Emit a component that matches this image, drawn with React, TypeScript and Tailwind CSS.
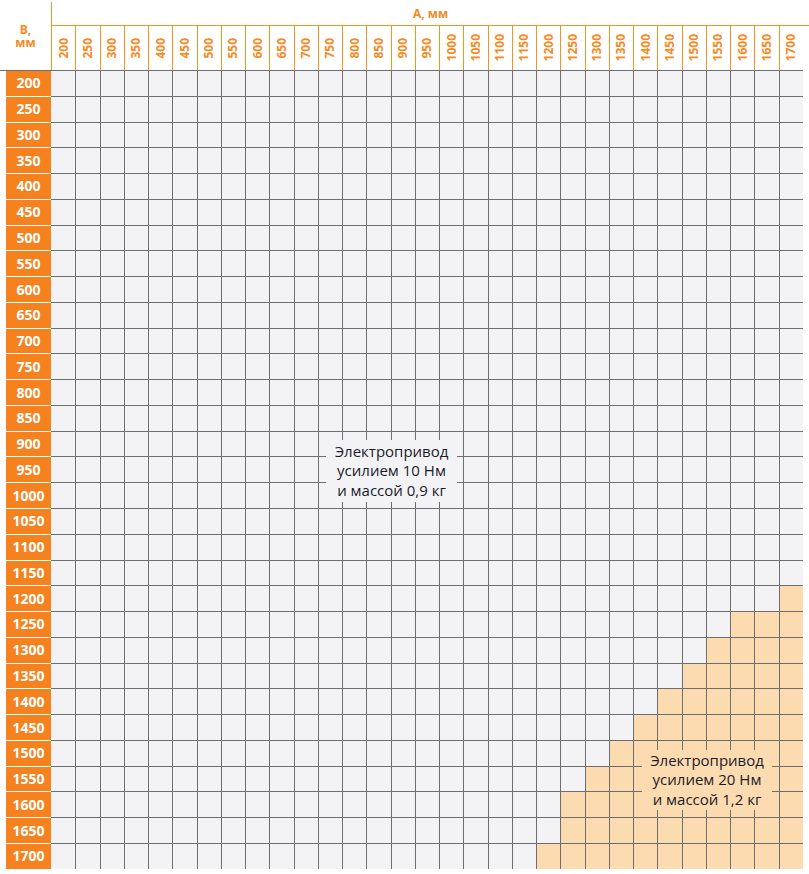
import React from "react";

const values = Array.from({ length: 31 }, (_, i) => 200 + i * 50);
const peachStart: Record<number, number> = {
  20: 30,
  21: 28,
  22: 27,
  23: 26,
  24: 25,
  25: 24,
  26: 23,
  27: 22,
  28: 21,
  29: 21,
  30: 20,
};

export default function App() {
  return (
    <div className="relative w-[809px] h-[874px] bg-white font-['Open_Sans',sans-serif] overflow-hidden">
      {/* Header */}
      <div className="flex h-[70px]">
        <div className="w-[51px] shrink-0 pt-[23px] flex flex-col items-center gap-[0px] text-[12px] leading-[14px] font-bold text-[#f58a1f]">
          <span className="block leading-[14px]">В,</span>
          <span className="block leading-[12px]">мм</span>
        </div>
        <div className="flex-1 flex flex-col">
          <div className="mt-[2px] h-[24px] border-l border-b border-[#f7931e] flex items-center justify-center text-[12px] font-bold text-[#f58a1f]">
            А, мм
          </div>
          <div className="flex h-[44px]">
            {values.map((v) => (
              <div
                key={v}
                className="w-[24.25px] shrink-0 border-l border-[#f7931e] flex items-center justify-center"
              >
                <span className="[writing-mode:vertical-rl] rotate-180 text-[12px] leading-none font-bold text-[#f58a1f]">
                  {v}
                </span>
              </div>
            ))}
          </div>
        </div>
      </div>

      {/* Body */}
      <div className="grid grid-cols-[51px_repeat(31,24.25px)] auto-rows-[25.77px]">
        {values.map((rv, r) => (
          <React.Fragment key={rv}>
            <div
              className={`pl-[6px] border-t ${r === 0 ? "border-[#6e6e6e]" : "border-white"}`}
            >
              <div className="h-full bg-[#f5821f] flex items-center justify-center text-white text-[14px] font-bold leading-none">
                {rv}
              </div>
            </div>
            {values.map((cv, c) => {
              const start = peachStart[r];
              const peach = start !== undefined && c >= start;
              return (
                <div
                  key={cv}
                  className={`border-t border-[#6e6e6e] ${c > 0 ? "border-l" : ""} ${
                    peach ? "bg-[#fddbb0]" : "bg-[#f3f3f5]"
                  }`}
                />
              );
            })}
          </React.Fragment>
        ))}
      </div>

      {/* Labels */}
      <div className="absolute left-[326px] top-[440px] w-[131px] h-[62px] bg-[#f3f3f5] flex flex-col items-center justify-center text-[15px] leading-[19.5px] text-[#1b1b2b]">
        <span>Электропривод</span>
        <span>усилием 10 Нм</span>
        <span>и массой 0,9 кг</span>
      </div>
      <div className="absolute left-[642px] top-[750px] w-[130px] h-[60px] bg-[#fddbb0] flex flex-col items-center justify-center text-[15px] leading-[19.5px] text-[#1b1b2b]">
        <span>Электропривод</span>
        <span>усилием 20 Нм</span>
        <span>и массой 1,2 кг</span>
      </div>
    </div>
  );
}
